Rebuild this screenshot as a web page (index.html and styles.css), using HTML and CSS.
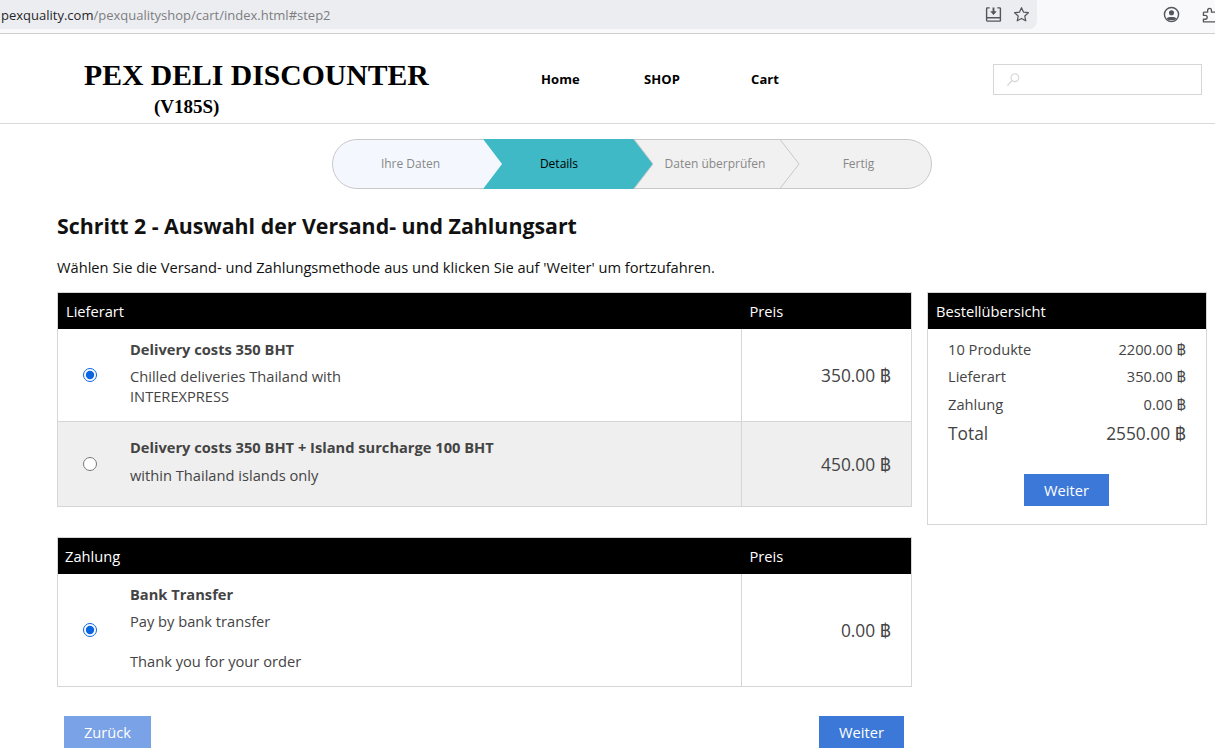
FILE: index.html
```html
<!DOCTYPE html>
<html lang="de">
<head>
<meta charset="utf-8">
<title>Warenkorb</title>
<link rel="stylesheet" href="styles.css">
</head>
<body>
<div class="chrome">
  <div class="urlbar">
    <span class="url"><span class="host">pexquality.com</span>/pexqualityshop/cart/index.html#step2</span>
    <div class="url-icons">
      <svg class="ico" viewBox="0 0 18 18"><path d="M5 2H2.500A.8.8 0 0 0 1.700 2.800V15.200A.8.8 0 0 0 2.500 16H15.500A.8.8 0 0 0 16.300 15.200V2.800A.8.8 0 0 0 15.500 2H13M1.700 12.500H16.300" fill="none" stroke="#55565c" stroke-width="1.500"/><path d="M8 1.500H10V5.500H12.500L9 9.500 5.500 5.500H8Z" fill="#55565c"/></svg>
      <svg class="ico" viewBox="0 0 18 18"><path d="M9 1.800 11.200 6.500 16.300 7.100 12.500 10.600 13.500 15.700 9 13.200 4.500 15.700 5.500 10.600 1.700 7.100 6.800 6.500Z" fill="none" stroke="#55565c" stroke-width="1.300" stroke-linejoin="round"/></svg>
    </div>
  </div>
  <div class="chrome-tools">
    <svg class="ico" viewBox="0 0 18 18"><circle cx="9" cy="9" r="7.500" fill="none" stroke="#55565c" stroke-width="1.500"/><circle cx="9" cy="7.200" r="2.700" fill="#55565c"/><path d="M4 13.200C5 11.200 13 11.200 14 13.200 12.500 15.800 5.500 15.800 4 13.200Z" fill="#55565c"/></svg>
    <svg class="ico puzzle" viewBox="0 0 18 18"><path d="M1.500 6.500H6V4.500A2 2 0 0 1 10 4.500V6.500H14.500V10.500M1.500 6.500V10H3.500A2 2 0 0 1 3.500 14H1.500V16.800H14.500V10.500" fill="none" stroke="#55565c" stroke-width="1.400" stroke-linejoin="round"/></svg>
  </div>
</div>

<header class="site-head">
  <div class="logo">
    <div class="logo-name">PEX DELI DISCOUNTER</div>
    <div class="logo-sub">(V185S)</div>
  </div>
  <nav class="nav">
    <a class="nav-link nav-home">Home</a>
    <a class="nav-link nav-shop">SHOP</a>
    <a class="nav-link">Cart</a>
  </nav>
  <div class="search">
    <svg class="search-ico" viewBox="0 0 16 16"><circle cx="9.500" cy="6" r="4.200" fill="none" stroke="#d6d6d6" stroke-width="1.200"/><path d="M6.500 9 1.500 14.500" stroke="#d6d6d6" stroke-width="1.400"/></svg>
  </div>
</header>

<div class="steps">
  <svg class="steps-bg" viewBox="0 0 600 50" width="600" height="50">
    <path d="M25 .5H151L170 25 151 49.500H25A24.500 24.500 0 0 1 25 .5Z" fill="#f4f8fe"/>
    <path d="M302 .5H575A24.500 24.500 0 0 1 575 49.500H302L321 25Z" fill="#f1f1f1"/>
    <path d="M151 0H302L321 25 302 50H151L170 25Z" fill="#3fb9c5"/>
    <path d="M151 .5H25A24.500 24.500 0 0 0 25 49.500H151M302 .5H575A24.500 24.500 0 0 1 575 49.500H302M302 .5 321 25 302 49.500M448 .5 467 25 448 49.500" fill="none" stroke="#c8c8c8"/>
  </svg>
  <span class="step step-1">Ihre Daten</span>
  <span class="step step-2 step-active">Details</span>
  <span class="step step-3">Daten überprüfen</span>
  <span class="step step-4">Fertig</span>
</div>

<main class="content">
  <h1 class="title">Schritt 2 - Auswahl der Versand- und Zahlungsart</h1>
  <p class="lead">Wählen Sie die Versand- und Zahlungsmethode aus und klicken Sie auf 'Weiter' um fortzufahren.</p>

  <div class="columns">
    <div class="left">
      <table class="opts">
        <colgroup><col class="col-radio"><col><col class="col-price"></colgroup>
        <thead>
          <tr><th class="th-name" colspan="2">Lieferart</th><th class="th-price">Preis</th></tr>
        </thead>
        <tbody>
          <tr>
            <td class="c-radio"><input type="radio" name="ship" checked></td>
            <td class="c-desc">
              <div class="opt-title">Delivery costs 350 BHT</div>
              <div class="opt-text">Chilled deliveries Thailand with INTEREXPRESS</div>
            </td>
            <td class="c-price">350.00 <span class="baht">฿</span></td>
          </tr>
          <tr class="alt">
            <td class="c-radio"><input type="radio" name="ship"></td>
            <td class="c-desc">
              <div class="opt-title">Delivery costs 350 BHT + Island surcharge 100 BHT</div>
              <div class="opt-text opt-wide">within Thailand islands only</div>
            </td>
            <td class="c-price">450.00 <span class="baht">฿</span></td>
          </tr>
        </tbody>
      </table>

      <table class="opts opts-pay">
        <colgroup><col class="col-radio"><col><col class="col-price"></colgroup>
        <thead>
          <tr><th class="th-name th-pay" colspan="2">Zahlung</th><th class="th-price">Preis</th></tr>
        </thead>
        <tbody>
          <tr>
            <td class="c-radio"><input type="radio" name="pay" checked></td>
            <td class="c-desc">
              <div class="opt-title">Bank Transfer</div>
              <div class="opt-text">Pay by bank transfer</div>
              <div class="opt-text opt-thanks">Thank you for your order</div>
            </td>
            <td class="c-price">0.00 <span class="baht">฿</span></td>
          </tr>
        </tbody>
      </table>

      <div class="actions">
        <a class="btn btn-back">Zurück</a>
        <a class="btn">Weiter</a>
      </div>
    </div>

    <aside class="summary">
      <div class="summary-head">Bestellübersicht</div>
      <div class="summary-body">
        <div class="sum-row"><span>10 Produkte</span><span>2200.00 <span class="baht">฿</span></span></div>
        <div class="sum-row"><span>Lieferart</span><span>350.00 <span class="baht">฿</span></span></div>
        <div class="sum-row"><span>Zahlung</span><span>0.00 <span class="baht">฿</span></span></div>
        <div class="sum-row sum-total"><span>Total</span><span>2550.00 <span class="baht">฿</span></span></div>
        <div class="sum-action"><a class="btn">Weiter</a></div>
      </div>
    </aside>
  </div>
</main>
</body>
</html>
```
FILE: styles.css
```css
* { box-sizing: border-box; }
html, body { margin: 0; padding: 0; }
body {
  font-family: "Open Sans", "DejaVu Sans", sans-serif;
  color: #444;
  background: #fff;
  font-size: 14.67px;
  height: 752px;
  overflow: hidden;
}
.baht { font-family: "Inter", sans-serif; line-height: 1; }

/* browser bar */
.chrome {
  height: 34px;
  display: flex;
  background: #f9f9fb;
  border-bottom: 1px solid #cfcfd2;
}
.urlbar {
  width: 1037px;
  height: 29px;
  background: #ecedf0;
  border-bottom-right-radius: 8px;
  display: flex;
  align-items: center;
  justify-content: space-between;
  padding: 0 7px 0 1px;
}
.url { font-size: 13px; color: #7c7d82; }
.host { color: #26262b; }
.url-icons { display: flex; gap: 11px; }
.ico { width: 17px; height: 17px; display: block; }
.chrome-tools {
  flex: 1;
  height: 29px;
  display: flex;
  align-items: center;
  justify-content: flex-end;
  gap: 22px;
  overflow: hidden;
  padding-left: 127px;
}
.chrome-tools .ico { flex: none; }
.puzzle { margin-right: -4px; }

/* site header */
.site-head {
  height: 90px;
  display: flex;
  align-items: flex-start;
  border-bottom: 1px solid #d9d9d9;
  padding: 0 13px 0 84px;
}
.logo { width: 457px; padding-top: 23px; color: #000; font-family: "Liberation Serif", serif; font-weight: 700; }
.logo-name { font-size: 29.7px; line-height: 36px; white-space: nowrap; }
.logo-sub { font-size: 19px; line-height: 24px; padding: 2px 0 0 70px; }
.nav { display: flex; padding-top: 36px; }
.nav-link { font-size: 13px; line-height: 18px; font-weight: 700; color: #000; letter-spacing: .1px; }
.nav-home { width: 103px; }
.nav-shop { width: 107px; }
.search {
  margin: 30px 0 0 auto;
  width: 209px;
  height: 31px;
  border: 1px solid #d6d6d6;
  padding: 7px 0 0 12px;
}
.search-ico { width: 15px; height: 15px; display: block; }

/* steps */
.steps {
  position: relative;
  width: 600px;
  height: 50px;
  margin: 15px 0 0 332px;
  display: flex;
  align-items: center;
  font-size: 12px;
  color: #888;
  padding-bottom: 2px;
}
.steps-bg { position: absolute; left: 0; top: 0; }
.step { position: relative; text-align: center; white-space: nowrap; }
.step-1 { width: 157px; }
.step-2 { width: 140px; }
.step-3 { width: 172px; }
.step-4 { width: 131px; padding-right: 16px; }
.step-active { color: #000; }

/* content */
.content { padding: 0 8px 0 57px; }
.title {
  font-size: 21.33px;
  line-height: 28px;
  font-weight: 700;
  color: #111;
  margin: 23px 0 0;
}
.lead { margin: 17px 0 0; line-height: 20px; color: #111; }
.columns { display: flex; gap: 15px; margin-top: 15px; align-items: flex-start; }
.left { width: 855px; flex: none; }

.opts {
  width: 855px;
  table-layout: fixed;
  border-collapse: collapse;
  border: 1px solid #d6d6d6;
}
.col-radio { width: 72px; }
.col-price { width: 170px; }
.opts-pay { margin-top: 30px; }
.opts th {
  background: #000;
  color: #fff;
  font-weight: 400;
  height: 36px;
  padding: 1px 8px 0;
  text-align: left;
}
.opts-pay th { height: 37px; }
.opts th.th-pay { padding-left: 7px; }
.opts td { vertical-align: middle; }
.c-radio { padding: 0 0 0 25px; }
.c-radio input { margin: 0; width: 14px; height: 14px; display: block; accent-color: #0a66e0; }
.c-desc { padding: 10px 0 15px .5px; height: 84px; }
.alt .c-desc { height: 85px; }
.opt-title { font-weight: 700; line-height: 20px; }
.opt-text { line-height: 20px; margin-top: 7px; max-width: 250px; }
.opt-wide { margin-top: 8px; max-width: none; }
.opt-thanks { margin-top: 20px; }
.c-price { text-align: right; padding-right: 20px; font-size: 17.33px; border-left: 1px solid #d6d6d6; }
.alt td { background: #efefef; border-top: 1px solid #d6d6d6; }

.btn {
  display: inline-block;
  width: 85px;
  height: 32px;
  line-height: 32px;
  background: #3c78d8;
  color: #fff;
  text-align: center;
}
.actions { display: flex; justify-content: space-between; padding: 29px 8px 0 7px; }
.btn-back { width: 87px; background: #7aa2e6; }

/* summary */
.summary { width: 280px; flex: none; height: 233px; border: 1px solid #d6d6d6; }
.summary-head { height: 36px; line-height: 37px; padding-left: 8px; background: #000; color: #fff; }
.summary-body { padding: 10px 20px 0; }
.sum-row { display: flex; justify-content: space-between; line-height: 20px; margin-bottom: 7px; }
.sum-row:nth-child(2) { margin-bottom: 8px; }
.sum-total { font-size: 17.33px; line-height: 24px; margin-bottom: 0; }
.sum-action { text-align: center; margin-top: 29px; padding-right: 1px; }
```
